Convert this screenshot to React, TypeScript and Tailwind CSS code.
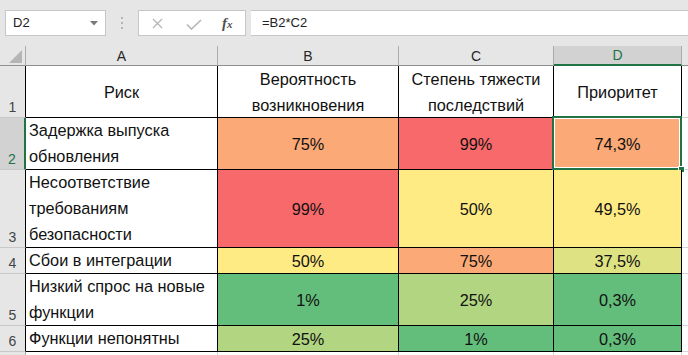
import type { ReactNode } from 'react';

// Excel-like color scale
const RED = 'bg-[#f8696b]';
const ORANGE = 'bg-[#fbaa77]';
const YELLOW = 'bg-[#ffeb84]';
const LIME = 'bg-[#dee283]';
const LGREEN = 'bg-[#b1d580]';
const GREEN = 'bg-[#63be7b]';

interface Row {
    n: number;
    risk: ReactNode;
    cells: { value: string; bg: string }[];
}

const rows: Row[] = [
    {
        n: 2,
        risk: (<>Задержка выпуска<br />обновления</>),
        cells: [
            { value: '75%', bg: ORANGE },
            { value: '99%', bg: RED },
            { value: '74,3%', bg: ORANGE },
        ],
    },
    {
        n: 3,
        risk: (<>Несоответствие<br />требованиям<br />безопасности</>),
        cells: [
            { value: '99%', bg: RED },
            { value: '50%', bg: YELLOW },
            { value: '49,5%', bg: YELLOW },
        ],
    },
    {
        n: 4,
        risk: 'Сбои в интеграции',
        cells: [
            { value: '50%', bg: YELLOW },
            { value: '75%', bg: ORANGE },
            { value: '37,5%', bg: LIME },
        ],
    },
    {
        n: 5,
        risk: (<>Низкий спрос на новые<br />функции</>),
        cells: [
            { value: '1%', bg: GREEN },
            { value: '25%', bg: LGREEN },
            { value: '0,3%', bg: GREEN },
        ],
    },
    {
        n: 6,
        risk: 'Функции непонятны',
        cells: [
            { value: '25%', bg: LGREEN },
            { value: '1%', bg: GREEN },
            { value: '0,3%', bg: GREEN },
        ],
    },
];

const RowNum = ({ n, active = false }: { n: number; active?: boolean }) => (
    <div
        className={`flex items-end justify-center pb-[3px] text-[14px] leading-none border-b border-[#c8c8c8] ${
            active
                ? 'bg-[#d2d2d2] text-[#217346] border-r-2 border-r-[#217346]'
                : 'bg-[#e6e6e6] text-[#444] border-r border-r-black'
        }`}
    >
        {n}
    </div>
);

const ColHead = ({ label, active = false }: { label: string; active?: boolean }) => (
    <div
        className={`flex items-center justify-center text-[14px] border-r border-[#ababab] ${
            active
                ? 'bg-[#d2d2d2] text-[#217346] border-b-2 border-b-[#217346]'
                : 'bg-[#e6e6e6] text-[#262626] border-b border-b-[#8f8f8f]'
        }`}
    >
        {label}
    </div>
);

export default function App() {
    return (
        <div className="w-[688px] h-[355px] overflow-hidden bg-white font-['Liberation_Sans',Arial,sans-serif] text-[#111]">
            {/* formula bar */}
            <div className="h-[46px] bg-[#e6e6e6] flex items-start pt-[10px] pl-[5px]">
                <div className="w-[101px] h-[26px] bg-white border border-[#c6c6c6] flex items-center justify-between pl-[7px] pr-[7px] text-[13px] text-[#222]">
                    <span>D2</span>
                    <svg width="8" height="5" viewBox="0 0 8 5"><path d="M0 0h8L4 4.5z" fill="#7a7a7a" /></svg>
                </div>
                <div className="w-[32px] h-[26px] flex flex-col items-center justify-center gap-[3px]">
                    <span className="w-[2px] h-[2px] bg-[#b4b4b4]" />
                    <span className="w-[2px] h-[2px] bg-[#b4b4b4]" />
                    <span className="w-[2px] h-[2px] bg-[#b4b4b4]" />
                </div>
                <div className="w-[108px] h-[26px] bg-white border border-[#c6c6c6] flex items-center">
                    <svg className="ml-[13px]" width="11" height="11" viewBox="0 0 11 11">
                        <path d="M1 1l9 9M10 1L1 10" stroke="#b5b5b5" strokeWidth="1.3" />
                    </svg>
                    <svg className="ml-[23px] mt-[2px]" width="16" height="11" viewBox="0 0 16 11">
                        <path d="M1 5.5l4.5 4.5L15 1" stroke="#b5b5b5" strokeWidth="1.6" fill="none" />
                    </svg>
                    <span className="ml-[20px] font-['Liberation_Serif',serif] italic font-bold text-[15px] text-[#505050] leading-none">
                        f<span className="text-[11px]">x</span>
                    </span>
                </div>
                <div className="ml-[5px] flex-1 h-[26px] bg-white border-y border-[#c6c6c6] flex items-center pl-[11px] text-[13px] text-[#222]">
                    =B2*C2
                </div>
            </div>

            {/* sheet */}
            <div className="grid grid-cols-[26px_192px_181px_155px_128px_1fr] grid-rows-[20px_52px_52px_78px_26px_52px_26px_1fr] h-[309px] text-[16.3px] leading-[26px]">
                <div className="bg-[#e6e6e6] border-r border-b border-[#ababab] border-b-[#8f8f8f] flex items-end justify-end pr-[3px] pb-[2px]">
                    <svg width="13" height="13" viewBox="0 0 13 13"><path d="M13 0v13H0z" fill="#b5b5b5" /></svg>
                </div>
                <ColHead label="A" />
                <ColHead label="B" />
                <ColHead label="C" />
                <ColHead label="D" active />
                <div className="bg-[#e6e6e6] border-b border-[#8f8f8f]" />

                {/* row 1 */}
                <RowNum n={1} />
                <div className="border-r border-b border-black flex items-center justify-center">Риск</div>
                <div className="border-r border-b border-black flex items-center justify-center text-center">
                    Вероятность<br />возникновения
                </div>
                <div className="border-r border-b border-black flex items-center justify-center text-center">
                    Степень тяжести<br />последствий
                </div>
                <div className="border-r border-b border-black flex items-center justify-center">Приоритет</div>
                <div className="border-b border-[#d4d4d4]" />

                {rows.map((r) => (
                    <Rowset key={r.n} row={r} />
                ))}

                <div className="bg-[#e6e6e6] border-r border-[#ababab]" />
                <div className="border-r border-[#d4d4d4]" />
                <div className="border-r border-[#d4d4d4]" />
                <div className="border-r border-[#d4d4d4]" />
                <div className="border-r border-[#d4d4d4]" />
                <div />
            </div>
        </div>
    );
}

const Rowset = ({ row }: { row: Row }) => {
    const active = row.n === 2;
    return (
        <>
            <RowNum n={row.n} active={active} />
            <div className="border-r border-b border-black pl-[3px] flex items-end">
                <div>{row.risk}</div>
            </div>
            {row.cells.map((c, i) => (
                <div
                    key={i}
                    className={`relative border-r border-b border-black flex items-center justify-center ${c.bg}`}
                >
                    {c.value}
                    {active && i === 2 && (
                        <>
                            <div className="absolute -top-[2px] -left-[2px] -right-[1px] -bottom-[1px] border-2 border-[#217346] shadow-[inset_0_0_0_1px_#fff]" />
                            <div className="absolute -right-[4px] -bottom-[4px] w-[7px] h-[7px] bg-[#217346] border border-white" />
                        </>
                    )}
                </div>
            ))}
            <div className="border-b border-[#d4d4d4]" />
        </>
    );
};
